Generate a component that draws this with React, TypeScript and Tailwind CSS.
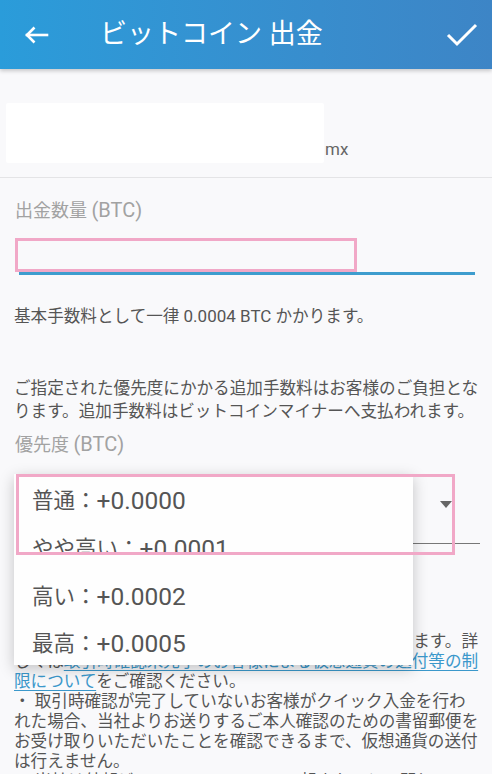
import React from "react";

function L({ children, size }: { children: React.ReactNode; size: string }) {
  return <span className={size}>{children}</span>;
}

export default function App() {
  const menuLatin = "text-[24.5px]";
  return (
    <div className="relative w-[492px] h-[774px] overflow-hidden bg-[#f9f9fb] font-['Roboto','Noto_Sans_CJK_JP',sans-serif] text-[#555]">
      {/* Header */}
      <div className="relative z-10 h-[69px] flex items-center bg-gradient-to-r from-[#2a9cda] to-[#3d85c6] shadow-[0_2px_4px_rgba(0,0,0,0.2)] text-white">
        <div className="w-[100px] pl-[24px] flex items-center">
          <svg width="25" height="20" viewBox="0 0 25 20" fill="none" stroke="white" strokeWidth="2.6" strokeLinecap="square">
            <path d="M3 10 H23" />
            <path d="M10.5 2.5 L3 10 L10.5 17.5" strokeLinecap="butt" />
          </svg>
        </div>
        <div className="text-[27px] leading-none flex-1 -mt-[1px]">ビットコイン 出金</div>
        <div className="pr-[14px]">
          <svg width="32" height="26" viewBox="0 0 32 26" fill="none" stroke="white" strokeWidth="3">
            <path d="M2 13 L11 22 L30 3" />
          </svg>
        </div>
      </div>

      {/* Address */}
      <div className="pt-[34px] border-b border-[#e4e4e6]">
        <div className="flex items-end pb-[14px]">
          <div className="ml-[6px] w-[318px] h-[60px] bg-white rounded-[2px]" />
          <div className="text-[17px] leading-none text-[#666] mb-[5px] ml-[1px]">mx</div>
        </div>
      </div>

      {/* Amount */}
      <div className="mt-[22px] pl-[15px] text-[18px] leading-[20px] text-[#a2a2a2] whitespace-nowrap">
        出金数量 <L size="text-[20px]">(BTC)</L>
      </div>
      <div className="relative mt-[17px] ml-[19px] w-[456px] h-[37px] border-b-[3px] border-[#3e9dce]">
        <div className="absolute -left-[4px] top-0 w-[342px] h-[34px] border-[3px] border-[#f1a8c7]" />
      </div>

      <div className="mt-[30px] pl-[14px] text-[16.6px] leading-[22px] text-[#555] whitespace-nowrap">
        基本手数料として一律 <L size="text-[17px]">0.0004 BTC</L> かかります。
      </div>

      <div className="mt-[49px] pl-[14px] text-[16.6px] leading-[23px] text-[#555] whitespace-nowrap">
        <div>ご指定された優先度にかかる追加手数料はお客様のご負担とな</div>
        <div>ります。追加手数料はビットコインマイナーへ支払われます。</div>
      </div>

      <div className="mt-[10px] pl-[15px] text-[18px] leading-[22px] text-[#a2a2a2] whitespace-nowrap">
        優先度 <L size="text-[20px]">(BTC)</L>
      </div>

      {/* Select */}
      <div className="relative mt-[22px] ml-[14px] w-[466px] h-[66px] border-b border-[#777]">
        <div className="h-[52px] flex items-center pl-[18px] text-[21.5px] text-[#555] whitespace-nowrap">
          普通：<L size={menuLatin}>+0.0000</L>
        </div>
        <svg className="absolute left-[426px] top-[23px]" width="12" height="7" viewBox="0 0 12 7">
          <path d="M0 0 H12 L6 7 Z" fill="#666" />
        </svg>
      </div>

      {/* Notes */}
      <div className="mt-[88px] pl-[14px] pr-[14px] text-[16.6px] leading-[20px] text-[#555] whitespace-nowrap">
        <div className="flex justify-between">
          <span>・ 仮想通貨の外部への送付については制限がござい</span>
          <span>ます。詳</span>
        </div>
        <div className="flex justify-between">
          <span>しくは</span>
          <span className="text-[#3b98cb] underline underline-offset-[3px]">取引時確認未完了のお客様による仮想通貨の送付等の制</span>
        </div>
        <div>
          <span className="text-[#3b98cb] underline underline-offset-[3px]">限について</span>をご確認ください。
        </div>
        <div>・ 取引時確認が完了していないお客様がクイック入金を行わ</div>
        <div>れた場合、当社よりお送りするご本人確認のための書留郵便を</div>
        <div>お受け取りいただいたことを確認できるまで、仮想通貨の送付</div>
        <div>は行えません。</div>
        <div>・ 当社は外部ビットコインアドレスで起きたことに関して一</div>
      </div>

      {/* Dropdown menu overlay */}
      <div className="absolute left-[14px] top-[474px] w-[399px] bg-[#fefefe] pt-[3px] shadow-[0_4px_14px_rgba(0,0,0,0.22)] text-[21.5px] text-[#555] z-20 whitespace-nowrap">
        <div className="h-[48px] flex items-center pl-[18px]">
          普通：<L size={menuLatin}>+0.0000</L>
        </div>
        <div className="h-[48px]">
          <div className="h-[28px] overflow-hidden">
            <div className="h-[48px] flex items-center pl-[18px]">
              やや高い：<L size={menuLatin}>+0.0001</L>
            </div>
          </div>
        </div>
        <div className="h-[48px] flex items-center pl-[18px]">
          高い：<L size={menuLatin}>+0.0002</L>
        </div>
        <div className="h-[44px] flex items-center pl-[18px] pt-[3px]">
          最高：<L size={menuLatin}>+0.0005</L>
        </div>
      </div>

      {/* Pink annotation */}
      <div className="absolute left-[16px] top-[474px] w-[439px] h-[81px] border-[3px] border-[#f1a8c7] z-30" />
    </div>
  );
}
